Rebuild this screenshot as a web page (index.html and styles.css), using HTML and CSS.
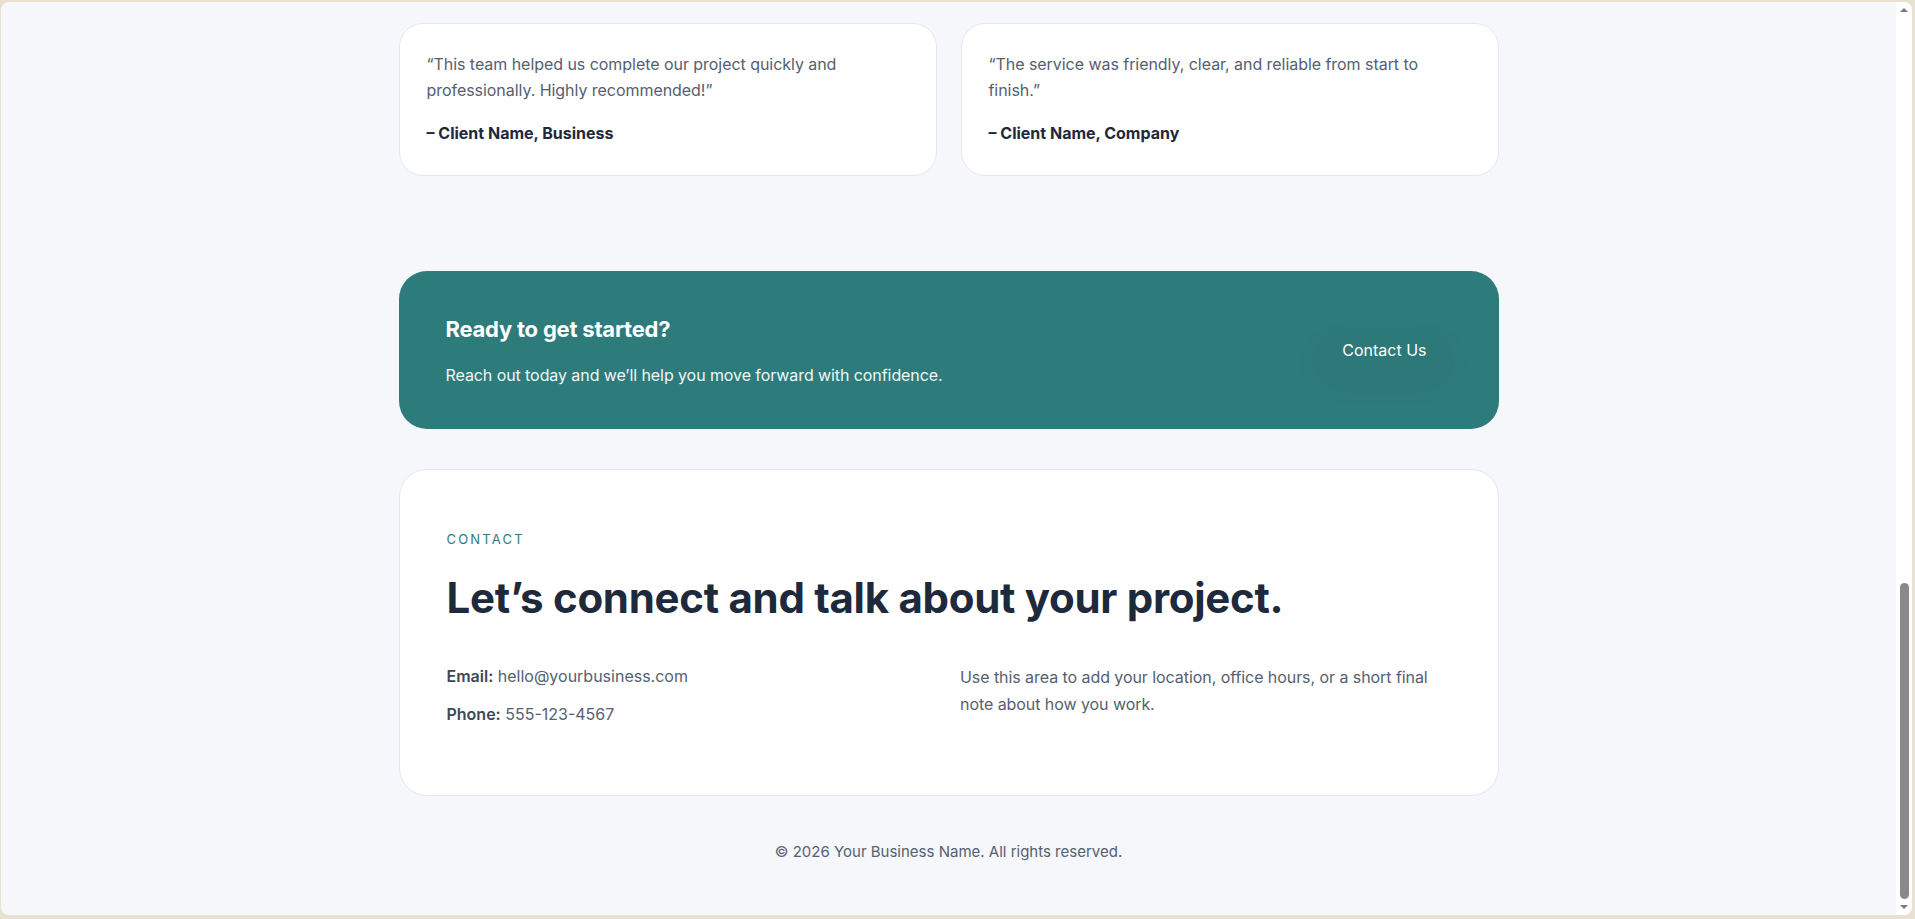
FILE: index.html
```html
<!DOCTYPE html>
<html lang="en">
<head>
<meta charset="utf-8">
<title>Your Business Name</title>
<link rel="stylesheet" href="styles.css">
</head>
<body>
<div class="window">
  <main class="page">
    <section class="testimonials">
      <article class="card quote-card">
        <p class="quote">“This team helped us complete our project quickly and professionally. Highly recommended!”</p>
        <p class="author">– Client Name, Business</p>
      </article>
      <article class="card quote-card">
        <p class="quote">“The service was friendly, clear, and reliable from start to finish.”</p>
        <p class="author">– Client Name, Company</p>
      </article>
    </section>

    <section class="cta">
      <div class="cta-text">
        <h2 class="cta-title">Ready to get started?</h2>
        <p class="cta-sub">Reach out today and we’ll help you move forward with confidence.</p>
      </div>
      <a class="cta-button" href="#contact">Contact Us</a>
    </section>

    <section class="card contact" id="contact">
      <p class="eyebrow">CONTACT</p>
      <h2 class="contact-title">Let’s connect and talk about your project.</h2>
      <div class="contact-grid">
        <div class="contact-details">
          <p class="detail"><strong>Email:</strong> hello@yourbusiness.com</p>
          <p class="detail"><strong>Phone:</strong> 555-123-4567</p>
        </div>
        <p class="contact-note">Use this area to add your location, office hours, or a short final note about how you work.</p>
      </div>
    </section>

    <footer class="footer">© 2026 Your Business Name. All rights reserved.</footer>
  </main>
  <div class="scrollbar" aria-hidden="true">
    <span class="arrow arrow-up"></span>
    <div class="track"><div class="thumb"></div></div>
    <span class="arrow arrow-down"></span>
  </div>
</div>
</body>
</html>
```

FILE: styles.css
```css
* { box-sizing: border-box; }

html, body {
  margin: 0;
  height: 100%;
}

body {
  background: #e9e1d0;
  font-family: Inter, "Noto Sans", "Liberation Sans", sans-serif;
  color: #1e293b;
  padding: 2px 3px 4px 1px;
}

.window {
  height: 100%;
  display: flex;
  background: #f5f7fb;
  border-radius: 8px;
  overflow: hidden;
}

.page {
  flex: 1;
  padding-top: 21px;
  display: flex;
  flex-direction: column;
  align-items: center;
}

.testimonials,
.cta,
.contact {
  width: 1100px;
}

.card {
  background: #ffffff;
  border: 1px solid #e2e8f0;
  border-radius: 24px;
}

.testimonials {
  display: grid;
  grid-template-columns: 1fr 1fr;
  gap: 24px;
}

.quote-card {
  padding: 28px 28px 28px 27px;
  min-height: 152px;
}

.quote {
  margin: 0 0 18px;
  font-size: 16px;
  line-height: 1.6;
  color: #556070;
  letter-spacing: -0.003em;
}

.author {
  margin: 0;
  font-size: 16px;
  line-height: 1.6;
  font-weight: 700;
  color: #1e293b;
}

.cta {
  margin-top: 95px;
  background: #2e7b7b;
  border-radius: 28px;
  padding: 44px 48px 40px 47px;
  display: flex;
  align-items: center;
  justify-content: space-between;
  color: #ffffff;
}

.cta-title {
  margin: 0 0 20px;
  font-size: 22px;
  line-height: 1.3;
  font-weight: 700;
  letter-spacing: -0.01em;
}

.cta-sub {
  margin: 0;
  font-size: 16px;
  line-height: 1.6;
  color: #f1f7f7;
  letter-spacing: -0.005em;
}

.cta-button {
  color: #ffffff;
  text-decoration: none;
  font-size: 16px;
  font-weight: 400;
  padding: 12px 24px 14px 26px;
  margin-bottom: 2px;
  border-radius: 999px;
  background: rgba(0, 0, 0, 0.012);
  box-shadow: 0 12px 30px rgba(0, 0, 0, 0.04);
}

.contact {
  margin-top: 40px;
  border-radius: 28px;
  padding: 60px 48px 56px 47px;
}

.eyebrow {
  margin: 0 0 26px;
  font-size: 13px;
  line-height: 18px;
  letter-spacing: 0.17em;
  color: #2e7b7b;
}

.contact-title {
  margin: 0 0 42px;
  font-size: 42px;
  line-height: 1.15;
  font-weight: 700;
  letter-spacing: -0.007em;
  color: #1e293b;
}

.contact-grid {
  display: grid;
  grid-template-columns: 1fr 1fr;
  gap: 24px;
}

.detail {
  margin: 0 0 12px;
  font-size: 16px;
  line-height: 25.6px;
  color: #556070;
}

.detail strong {
  font-weight: 600;
  color: #3f4754;
}

.contact-note {
  margin: 0;
  font-size: 16px;
  line-height: 27px;
  color: #556070;
  letter-spacing: -0.004em;
}

.footer {
  padding-top: 44px;
  font-size: 15px;
  line-height: 24px;
  color: #556070;
}

.scrollbar {
  width: 16px;
  background: #ffffff;
  display: flex;
  flex-direction: column;
  align-items: center;
}

.arrow {
  width: 0;
  height: 0;
  border-left: 4px solid transparent;
  border-right: 4px solid transparent;
  margin: 6px 0;
}

.arrow-up { border-bottom: 4px solid #7a7a7a; }
.arrow-down { border-top: 4px solid #7a7a7a; }

.track {
  flex: 1;
  width: 100%;
  display: flex;
  flex-direction: column;
  justify-content: flex-end;
  align-items: center;
}

.thumb {
  width: 9px;
  height: 316px;
  background: #898989;
  border-radius: 5px;
}
```
